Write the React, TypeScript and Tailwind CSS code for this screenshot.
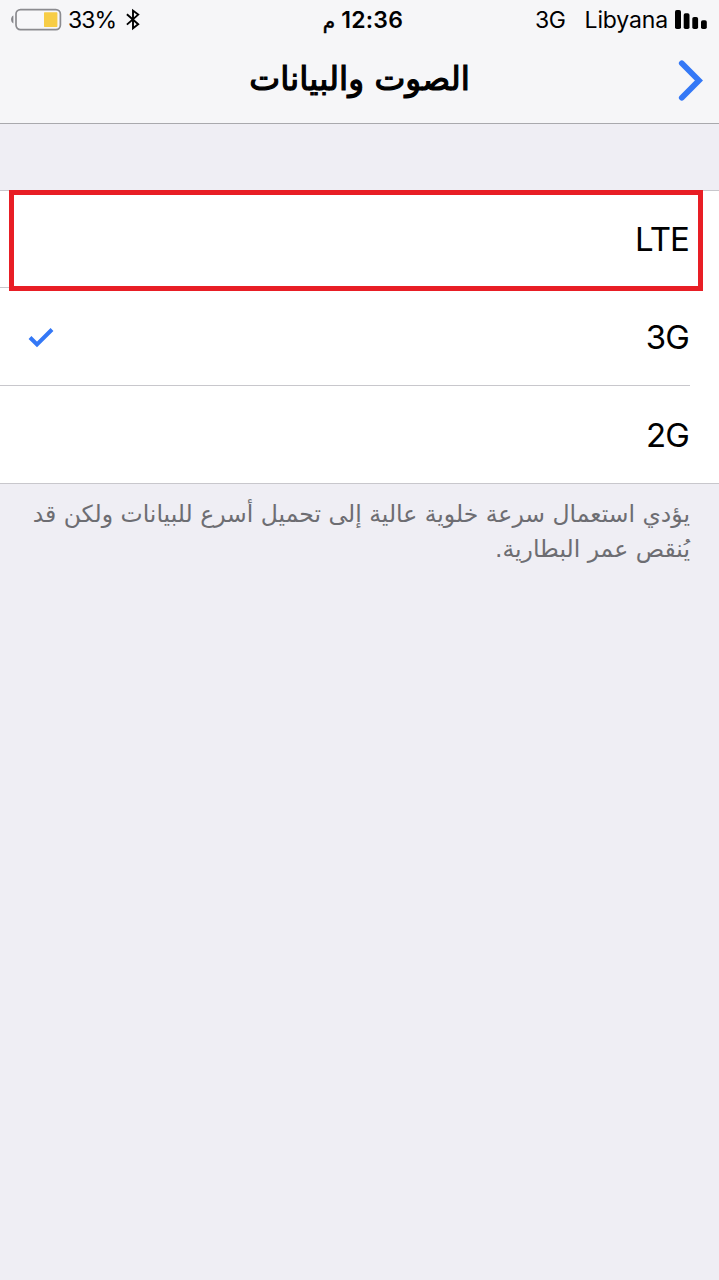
import React from "react";

function Battery() {
  return (
    <svg className="block h-[24px] w-[52px]" viewBox="0 0 52 24">
      <path d="M3.4 7.6 C2 8.2 1.1 9.6 1.1 11.5 C1.1 13.4 2 14.8 3.4 15.4 Z" fill="#85858a" />
      <rect x="6" y="1.6" width="44.4" height="20" rx="4.5" fill="#f7f7f9" stroke="#8b8b8f" strokeWidth="1.7" />
      <rect x="34" y="4.3" width="13.4" height="14.6" rx="0.6" fill="#f7cd46" />
    </svg>
  );
}

function Bluetooth() {
  return (
    <svg className="block h-[24px] w-[14px]" viewBox="0 0 14 24" fill="none" stroke="#000" strokeWidth="1.9">
      <path d="M0.9 6.2 L12.2 16.2 L7 20.2 V2.6 L12.2 6.6 L0.9 16.6" />
    </svg>
  );
}

function Signal() {
  return (
    <svg className="block h-[20px] w-[32px]" viewBox="0 0 32 20">
      <rect x="0" y="0" width="6" height="19" rx="1.8" />
      <rect x="8.7" y="3.3" width="5.8" height="15.7" rx="1.8" />
      <rect x="17.3" y="7" width="5.8" height="12" rx="1.8" />
      <rect x="26" y="10.3" width="5.8" height="8.7" rx="1.8" />
    </svg>
  );
}

function StatusBar() {
  return (
    <div dir="ltr" className="grid h-10 grid-cols-[1fr_auto_1fr] items-center pr-3 pl-[10px] text-[23px]">
      <div className="flex items-center">
        <Battery />
        <span className="ml-[6px] tracking-[-0.9px]">33%</span>
        <span className="ml-[10px]"><Bluetooth /></span>
      </div>
      <div className="flex items-center gap-[6px] pl-[9px] font-semibold">
        <span className="pt-[2px] font-['DejaVu_Sans',sans-serif] text-[20px] font-normal [-webkit-text-stroke:0.5px_black]">م</span>
        <span className="tracking-[0.25px]">12:36</span>
      </div>
      <div className="flex items-center justify-end">
        <span className="tracking-[-0.4px]">3G</span>
        <span className="ml-[19px] tracking-[-0.15px]">Libyana</span>
        <span className="ml-[7px]"><Signal /></span>
      </div>
    </div>
  );
}

function NavBar() {
  return (
    <div className="grid h-[81px] grid-cols-[1fr_auto_1fr] items-center px-4">
      <svg className="h-[42px] w-[26px]" viewBox="0 0 26 42" fill="none" stroke="#3478f6" strokeWidth="5.8" strokeLinecap="round" strokeLinejoin="miter">
        <path d="M4.8 3.3 L21.9 20.5 L4.8 37.7" />
      </svg>
      <h1 className="pb-[2px] font-['DejaVu_Sans',sans-serif] text-[32.8px] font-normal whitespace-nowrap [-webkit-text-stroke:1.2px_black]">الصوت والبيانات</h1>
      <span />
    </div>
  );
}

function Row({ label, checked, last }: { label: string; checked?: boolean; last?: boolean }) {
  return (
    <div className={last ? "pr-0" : "pr-[29px]"}>
      <div className={"flex h-[98px] items-center justify-between border-b border-[#c8c7cc] pl-[28px] " + (last ? "pr-[29px]" : "")}>
        <span className="pt-[2px] pr-px text-[33px] tracking-[-0.9px]">{label}</span>
        {checked && (
          <svg className="mt-[3px] h-[22px] w-[26px]" viewBox="0 0 26 22" fill="none" stroke="#3478f6" strokeWidth="4">
            <path d="M2 10.5 L9 17.5 L24 2.5" />
          </svg>
        )}
      </div>
    </div>
  );
}

export default function App() {
  return (
    <main dir="rtl" className="min-h-[1280px] w-[719px] overflow-hidden bg-[#efeef4] font-['Inter',sans-serif] text-black">
      <header className="h-[124px] border-b border-[#a9a9ad] bg-[#f6f6f8]">
        <StatusBar />
        <NavBar />
      </header>
      <section className="relative mt-[66px] bg-white shadow-[inset_0_1px_0_#c8c7cc]">
        <div className="absolute top-0 left-[9px] h-[101px] w-[694px] border-[5px] border-[#e81e25]" />
        <Row label="LTE" />
        <Row label="3G" checked />
        <Row label="2G" last />
      </section>
      <p className="pt-[13px] pr-[29px] font-['DejaVu_Sans',sans-serif] text-[23.5px] leading-[35px] whitespace-nowrap text-[#6d6d72]">
        يؤدي استعمال سرعة خلوية عالية إلى تحميل أسرع للبيانات ولكن قد
        <br />
        يُنقص عمر البطارية.
      </p>
    </main>
  );
}
